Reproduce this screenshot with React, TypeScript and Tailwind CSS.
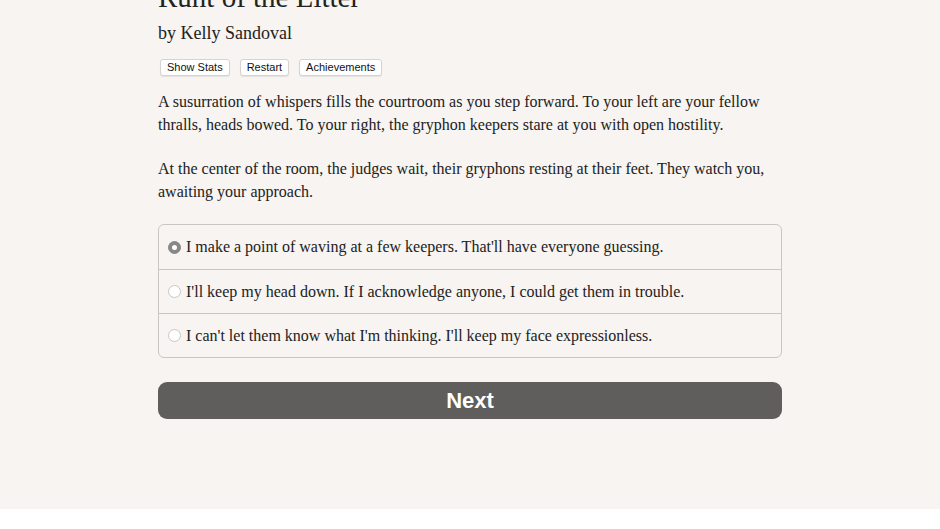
const serif = { fontFamily: '"Liberation Serif", "DejaVu Serif", serif' };

const choices = [
  "I make a point of waving at a few keepers. That'll have everyone guessing.",
  "I'll keep my head down. If I acknowledge anyone, I could get them in trouble.",
  "I can't let them know what I'm thinking. I'll keep my face expressionless.",
];

export default function App() {
  return (
    <div className="min-h-screen w-full bg-[#f7f4f1] text-[#222]" style={serif}>
      <div className="mx-auto w-[624px]">
        <h1 className="-mt-[20px] text-[29px] leading-[34px]">Runt of the Litter</h1>
        <p className="mt-[7px] text-[18px] leading-[24px]">by Kelly Sandoval</p>

        <div className="mt-[14px] flex gap-[10px] pl-[2px] font-['Liberation_Sans',sans-serif] text-[11px]">
          {['Show Stats', 'Restart', 'Achievements'].map((b) => (
            <button
              key={b}
              className="h-[17px] rounded-[3px] border border-[#d6d3d0] bg-white px-[6px] leading-[15px] text-[#111] shadow-[0_1px_1px_rgba(0,0,0,0.08)]"
            >
              {b}
            </button>
          ))}
        </div>

        <div className="mt-[14px] space-y-[21px] text-[16px] leading-[23px]">
          <p>
            A susurration of whispers fills the courtroom as you step forward. To your left are your fellow thralls,
            heads bowed. To your right, the gryphon keepers stare at you with open hostility.
          </p>
          <p>
            At the center of the room, the judges wait, their gryphons resting at their feet. They watch you, awaiting
            your approach.
          </p>
        </div>

        <div className="mt-[21px] overflow-hidden rounded-[6px] border border-[#c9c6c3]">
          {choices.map((c, i) => (
            <label
              key={c}
              className={`flex h-[44px] items-center gap-[5px] px-[9px] text-[16px] ${i > 0 ? 'border-t border-[#c9c6c3]' : ''}`}
            >
              <span
                className={`flex h-[13px] w-[13px] items-center justify-center rounded-full border ${
                  i === 0 ? 'border-[#8a8886] bg-[#8a8886]' : 'border-[#c9c6c3] bg-white'
                }`}
              >
                {i === 0 && <span className="h-[5px] w-[5px] rounded-full bg-white" />}
              </span>
              <span>{c}</span>
            </label>
          ))}
        </div>

        <button className="mt-[24px] flex h-[37px] w-full items-center justify-center rounded-[9px] bg-[#5f5e5c] font-['Liberation_Sans',sans-serif] text-[22px] font-bold text-white">
          Next
        </button>
      </div>
    </div>
  );
}
